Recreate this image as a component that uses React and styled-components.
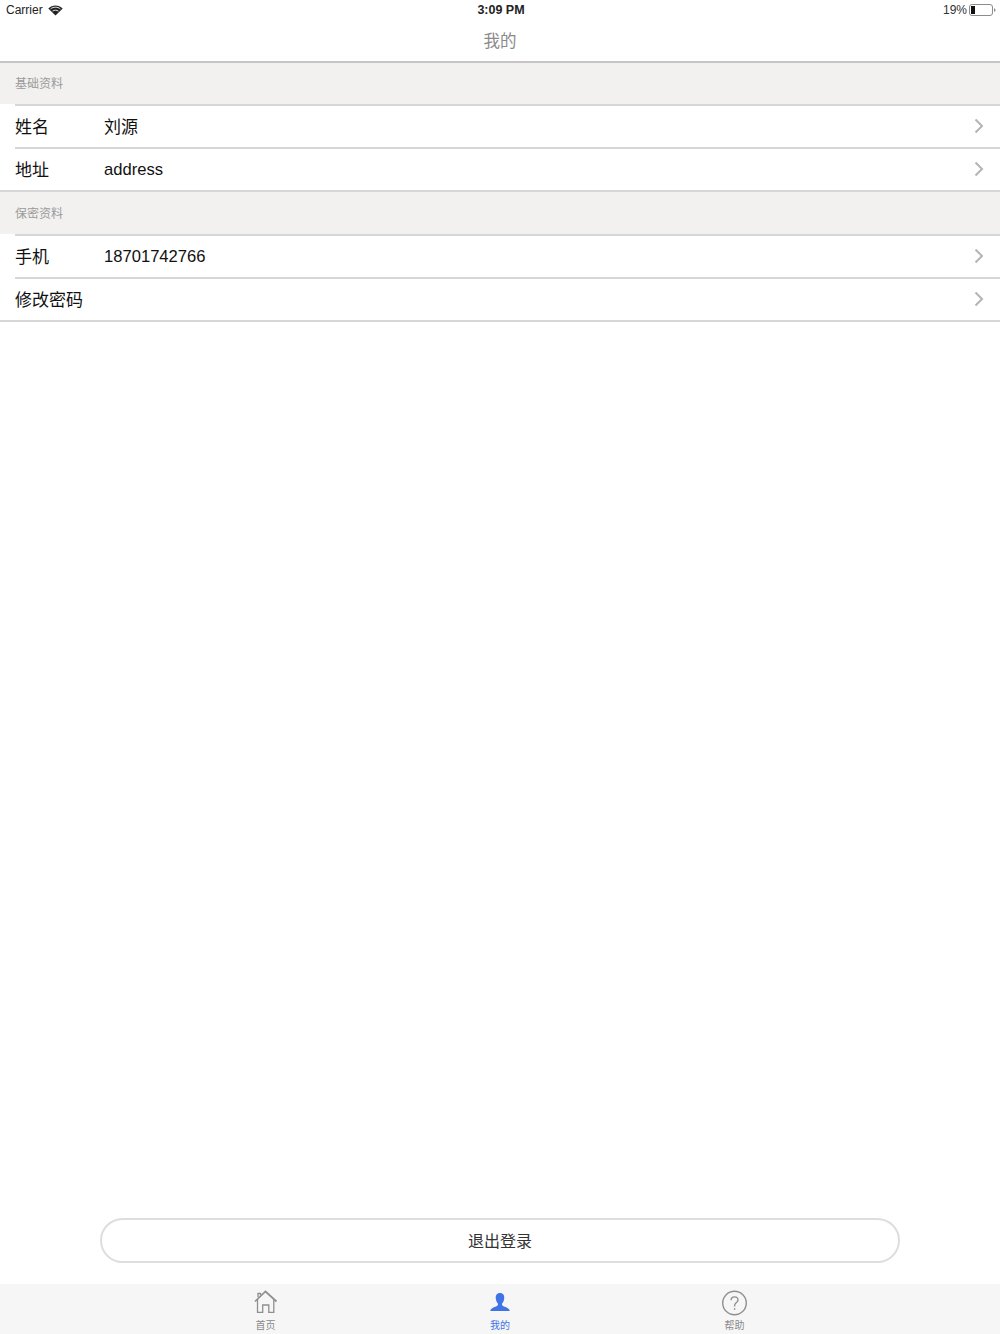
import React from "react";
import styled, { createGlobalStyle } from "styled-components";

const GlobalStyle = createGlobalStyle`
  html, body {
    margin: 0;
    padding: 0;
    background: #fff;
  }
  body {
    font-family: "Liberation Sans", "Noto Sans CJK SC", sans-serif;
  }
`;

const Page = styled.div`
  width: 1000px;
  height: 1334px;
  display: flex;
  flex-direction: column;
  overflow: hidden;
  background: #fff;
`;

const StatusBar = styled.div`
  height: 20px;
  display: grid;
  grid-template-columns: 1fr auto 1fr;
  align-items: center;
  padding: 0 3px 0 6px;
  font-size: 12px;
  color: #222;
`;
const StatusLeft = styled.div`
  display: flex;
  align-items: center;
  gap: 5px;
`;
const StatusTime = styled.div`
  font-weight: 700;
  font-size: 12.5px;
  padding-right: 1px;
`;
const StatusRight = styled.div`
  display: flex;
  align-items: center;
  justify-content: flex-end;
  gap: 2px;
  color: #333;
`;

const NavBar = styled.div`
  height: 40px;
  display: flex;
  align-items: center;
  justify-content: center;
  border-bottom: 2px solid #c6c4c6;
  font-size: 16.5px;
  color: #8a8a8a;
  padding-bottom: 1px;
`;

const SectionHeader = styled.div`
  height: ${(p) => p.$height}px;
  box-sizing: border-box;
  background: #f2f1f0;
  display: flex;
  align-items: center;
  padding: 0 15px 2px;
  font-size: 12px;
  color: #9a9a9a;
`;

const Row = styled.div`
  height: 41px;
  display: flex;
  align-items: center;
  padding: 0 15px;
  color: #111;
`;

// table cell separator, inset from the left unless it closes a group
const Divider = styled.div`
  height: 2px;
  background: #d6d5d8;
  margin-left: ${(p) => (p.$full ? 0 : 15)}px;
`;

const RowLabel = styled.div`
  width: 89px;
  flex: none;
  font-size: 17px;
  padding-bottom: 2px;
`;
const RowValue = styled.div`
  flex: 1;
  font-size: ${(p) => (p.$cjk ? 17 : 16.6)}px;
  padding-bottom: ${(p) => (p.$cjk ? 2 : 0)}px;
`;
const Chevron = styled.svg`
  width: 10px;
  height: 16px;
  margin-right: 1px;
  margin-bottom: 1px;
  flex: none;
`;

const Spacer = styled.div`
  flex: 1;
`;

const LogoutWrap = styled.div`
  padding: 0 100px 21px;
`;
const LogoutButton = styled.button`
  width: 100%;
  height: 45px;
  display: block;
  background: #fff;
  border: 2px solid #dedede;
  border-radius: 23px;
  font-family: inherit;
  font-size: 16px;
  color: #333;
  padding: 0 0 2px;
`;

const TabBar = styled.div`
  height: 50px;
  background: #f6f6f6;
  display: grid;
  grid-template-columns: repeat(3, 234.5px);
  justify-content: center;
`;
const Tab = styled.div`
  display: flex;
  flex-direction: column;
  align-items: center;
  padding-top: 6px;
  color: ${(p) => (p.$active ? "#3f73e6" : "#8a8a8a")};
  font-size: 10px;
  line-height: 12px;
`;
const TabIcon = styled.svg`
  width: 26px;
  height: 26px;
  margin-bottom: 4px;
  flex: none;
`;

const ArrowRight = () => (
  <Chevron viewBox="0 0 10 16" fill="none">
    <path d="M1.5 1.5 L8 8 L1.5 14.5" stroke="#b4b4b6" strokeWidth="2" />
  </Chevron>
);

const Wifi = () => (
  <svg width="15" height="11" viewBox="0 0 15 11">
    <path
      d="M7.5 10.5 L0.3 3.6 C4.4 -0.6 10.6 -0.6 14.7 3.6 Z"
      fill="#222"
    />
    <path d="M2.6 3.9 C5.4 1.6 9.6 1.6 12.4 3.9" stroke="#fff" strokeWidth="0.9" fill="none" />
    <path d="M4.6 6.1 C6.2 4.9 8.8 4.9 10.4 6.1" stroke="#fff" strokeWidth="0.9" fill="none" />
  </svg>
);

const Battery = () => (
  <svg width="28" height="12" viewBox="0 0 28 12">
    <rect x="0.5" y="0.5" width="23" height="11" rx="2.5" fill="none" stroke="#8c8c8c" />
    <rect x="2" y="2" width="4" height="8" fill="#111" />
    <path d="M25 4.2 C26 4.5 26.5 5 26.5 6 C26.5 7 26 7.5 25 7.8 Z" fill="#8c8c8c" />
  </svg>
);

const HomeIcon = () => (
  <TabIcon viewBox="0 0 26 26" fill="none" stroke="#8f8f8f" strokeWidth="1.3">
    <path d="M2 11.5 L12.5 1.5 L23.5 11.5" strokeWidth="1.7" />
    <path d="M4.5 9.5 V22.3 H9.7 V15 H15.8 V22.3 H20.8 V9.5" />
    <path d="M5 7 V3.5 H7.5 V5" />
  </TabIcon>
);

const UserIcon = () => (
  <TabIcon viewBox="0 0 26 26">
    <path
      d="M13 3 C16.2 3 17.6 5.4 17.2 8.6 C16.9 11 16 12.8 15 13.8 C14.8 15.2 15.4 15.8 17 16.5 C20 17.7 22.4 18.6 22.8 21 L3.2 21 C3.6 18.6 6 17.7 9 16.5 C10.6 15.8 11.2 15.2 11 13.8 C10 12.8 9.1 11 8.8 8.6 C8.4 5.4 9.8 3 13 3 Z"
      fill="#3f73e6"
    />
  </TabIcon>
);

const HelpIcon = () => (
  <TabIcon viewBox="0 0 26 26" fill="none" stroke="#8f8f8f" strokeWidth="1.4">
    <circle cx="12.5" cy="13" r="11.8" />
    <path d="M9.1 10.2 C9.1 8 10.7 6.9 12.5 6.9 C14.5 6.9 16 8.2 16 10 C16 12.4 12.6 12.6 12.6 15.6 V16.4" />
    <path d="M12.6 18.2 V19.8" />
  </TabIcon>
);

const App = () => {
  return (
    <>
      <GlobalStyle />
      <Page>
        <StatusBar>
          <StatusLeft>
            Carrier
            <Wifi />
          </StatusLeft>
          <StatusTime>3:09 PM</StatusTime>
          <StatusRight>
            19%
            <Battery />
          </StatusRight>
        </StatusBar>
        <NavBar>我的</NavBar>

        <SectionHeader $height={41}>基础资料</SectionHeader>
        <Divider />
        <Row>
          <RowLabel>姓名</RowLabel>
          <RowValue $cjk>刘源</RowValue>
          <ArrowRight />
        </Row>
        <Divider />
        <Row>
          <RowLabel>地址</RowLabel>
          <RowValue>address</RowValue>
          <ArrowRight />
        </Row>
        <Divider $full />

        <SectionHeader $height={42}>保密资料</SectionHeader>
        <Divider />
        <Row>
          <RowLabel>手机</RowLabel>
          <RowValue>18701742766</RowValue>
          <ArrowRight />
        </Row>
        <Divider />
        <Row>
          <RowLabel>修改密码</RowLabel>
          <RowValue />
          <ArrowRight />
        </Row>
        <Divider $full />

        <Spacer />
        <LogoutWrap>
          <LogoutButton>退出登录</LogoutButton>
        </LogoutWrap>
        <TabBar>
          <Tab>
            <HomeIcon />
            首页
          </Tab>
          <Tab $active>
            <UserIcon />
            我的
          </Tab>
          <Tab>
            <HelpIcon />
            帮助
          </Tab>
        </TabBar>
      </Page>
    </>
  );
};

export default App;
